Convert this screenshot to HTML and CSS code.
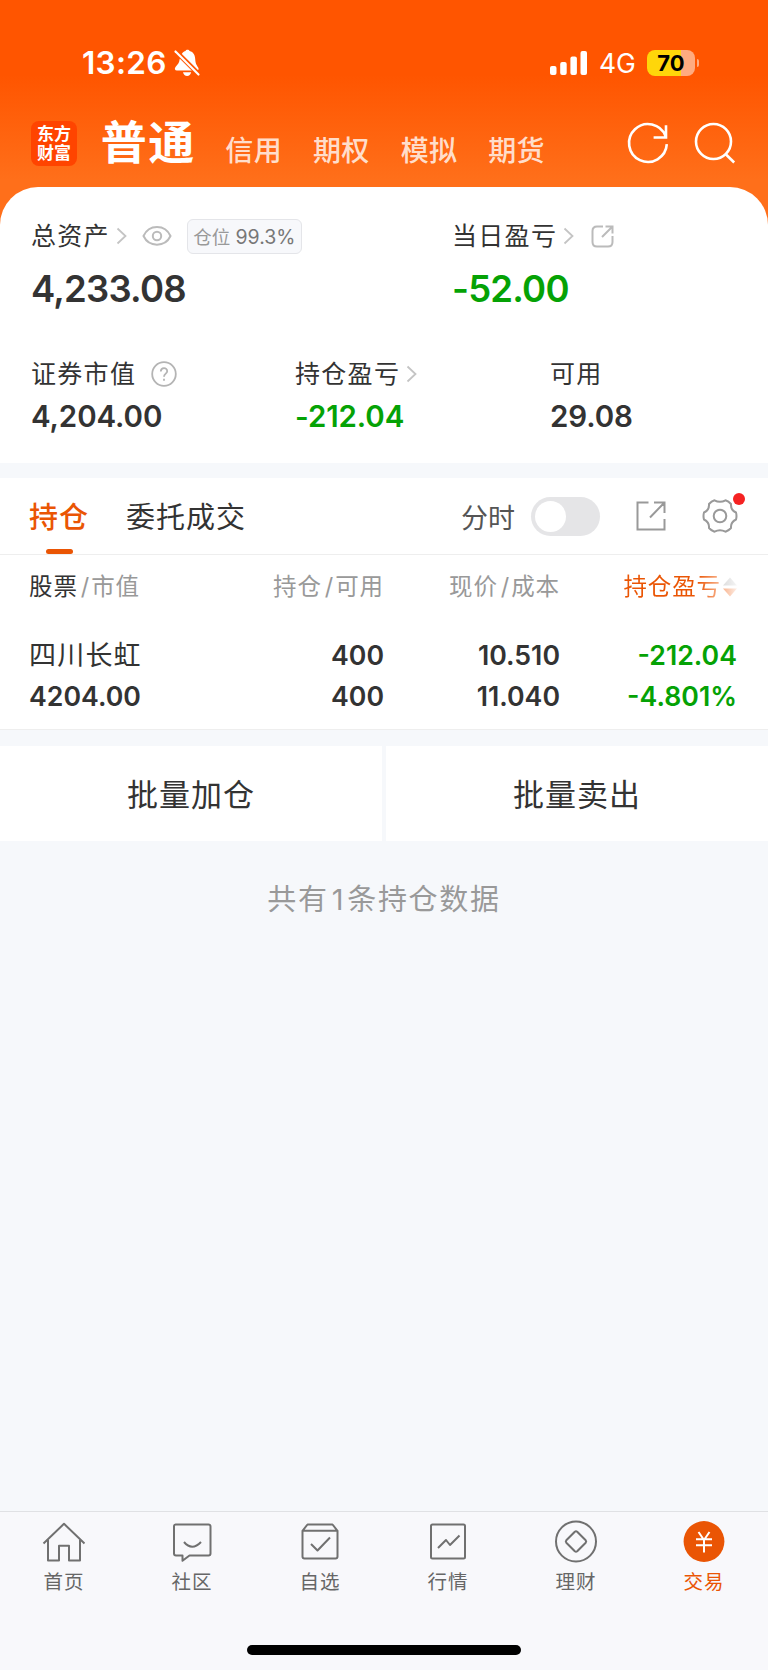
FILE: index.html
```html
<!DOCTYPE html>
<html lang="zh-CN">
<head>
<meta charset="utf-8">
<meta name="viewport" content="width=device-width, initial-scale=1">
<title>交易</title>
<link rel="stylesheet" href="styles.css">
</head>
<body>
<div class="page">

<div class="top">
  <div class="status">
    <span class="time">13:26</span>
    <svg class="bell" width="26" height="28" viewBox="0 0 26 28">
      <path fill="#fff" d="M6.800 7C8 4 9.500 2.500 11.500 2C12 .3 15 .3 15.600 2C19.500 3 21 6 21.200 10C21.400 14.500 22.500 16 24 18.200C25.200 20.200 24.500 21.500 22.500 21.500H3C.7 21.500.3 19.500 1.500 18C4 15 5.200 14 5.600 10.500Z"/>
      <path fill="#fff" d="M9 23.300h8.200c-.6 2.400-2 3.700-4.100 3.700s-3.600-1.300-4.100-3.700z"/>
      <path stroke="#ff5500" stroke-width="4.600" d="M2 2.500L25 25.500"/>
      <path stroke="#fff" stroke-width="2.200" stroke-linecap="round" d="M1.500 2.500L24.500 25.500"/>
    </svg>
    <svg class="signal" width="37" height="24" viewBox="0 0 37 24">
      <rect x="0" y="15" width="6.500" height="9" rx="2"/>
      <rect x="10.200" y="11" width="6.500" height="13" rx="2"/>
      <rect x="20.400" y="5.500" width="6.500" height="18.500" rx="2"/>
      <rect x="30.500" y="0" width="6.500" height="24" rx="2"/>
    </svg>
    <span class="net">4G</span>
    <span class="battery">70</span><i class="cap"></i>
  </div>
  <div class="nav">
    <div class="logo">东方<br>财富</div>
    <b class="now">普通</b>
    <span class="type">信用</span>
    <span class="type">期权</span>
    <span class="type">模拟</span>
    <span class="type">期货</span>
    <svg class="refresh" width="42" height="42" viewBox="0 0 42 42" stroke="#fff" stroke-width="2.600">
      <path d="M39.800 22.200A18.900 18.900 0 1 1 38.500 14M39 3.200v12.300H26.600"/>
    </svg>
    <svg class="search" width="42" height="42" viewBox="0 0 42 42" stroke="#fff" stroke-width="2.600">
      <circle cx="19.500" cy="19.500" r="17.500"/><path d="M31.500 32L40.200 40.500"/>
    </svg>
  </div>
</div>

<div class="card">
  <div class="row1">
    <div class="total">
      <div class="label">总资产
        <svg class="arrow" width="11" height="18" viewBox="0 0 11 18"><path d="M1.500 1.500L9.500 9L1.500 16.500"/></svg>
        <svg class="eye" width="30" height="22" viewBox="0 0 30 22"><path d="M1.500 11C7-1 23-1 28.500 11C23 22.500 7 22.500 1.500 11Z"/><circle cx="15" cy="11" r="4.200"/></svg>
        <span class="badge">仓位 <em>99.3%</em></span>
      </div>
      <div class="big">4,233.08</div>
    </div>
    <div class="today">
      <div class="label">当日盈亏
        <svg class="arrow" width="11" height="18" viewBox="0 0 11 18"><path d="M1.500 1.500L9.500 9L1.500 16.500"/></svg>
        <svg class="out" width="23" height="23" viewBox="0 0 23 23"><path d="M12 1.500H6Q1.500 1.500 1.500 6v11q0 4.500 4.500 4.500h11q4.500 0 4.500-4.500v-6M14.500 1.500h7v7M21.500 1.500L11 12"/></svg>
      </div>
      <div class="big green">-52.00</div>
    </div>
  </div>
  <div class="row2">
    <div>
      <div class="label">证券市值
        <svg class="help" width="26" height="26" viewBox="0 0 26 26"><circle cx="13" cy="13" r="11.800"/><path d="M9.800 10.500C9.800 6 16.200 6 16.200 10.200C16.200 12.800 13 12.600 13 15.800M13 17.800v2"/></svg>
      </div>
      <div class="mid">4,204.00</div>
    </div>
    <div>
      <div class="label">持仓盈亏
        <svg class="arrow" width="11" height="18" viewBox="0 0 11 18"><path d="M1.500 1.500L9.500 9L1.500 16.500"/></svg>
      </div>
      <div class="mid green">-212.04</div>
    </div>
    <div>
      <div class="label">可用</div>
      <div class="mid">29.08</div>
    </div>
  </div>
</div>

<div class="tabs">
  <span class="tab on">持仓</span>
  <span class="tab">委托成交</span>
  <span class="fs">分时</span>
  <span class="switch"></span>
  <svg class="share" width="30" height="30" viewBox="0 0 30 30"><path d="M12.500 1.500H1.500v27h27V18M18 1.500h10.500v10.500M28.500 1.500L14 16.500"/></svg>
  <div class="gear">
    <svg width="36" height="36" viewBox="0 0 36 36"><path d="M34 14.500Q35 18 34 21.500Q28.500 24 29 30Q26.500 32.800 23.500 33.700Q18 30.600 12.500 33.700Q9.500 32.800 7 30Q7.500 24 2 21.500Q1 18 2 14.500Q7.500 12 7 6Q9.500 3.200 12.500 2.300Q18 5.400 23.500 2.300Q26.500 3.200 29 6Q28.500 12 34 14.500Z"/><circle cx="18" cy="18" r="6.300"/></svg>
    <i></i>
  </div>
</div>

<div class="list">
  <div class="line head">
    <span><b>股票</b><s>/</s>市值</span>
    <span>持仓<s>/</s>可用</span>
    <span>现价<s>/</s>成本</span>
    <span class="sort"><em>持仓盈亏</em><svg width="14" height="20" viewBox="0 0 14 20"><defs><linearGradient id="up"><stop offset="0" stop-color="#ddd"/><stop offset="1" stop-color="#f5f5f5"/></linearGradient><linearGradient id="down"><stop offset="0" stop-color="#f9b590"/><stop offset="1" stop-color="#fdeee6"/></linearGradient></defs><path fill="url(#up)" d="M0 8.500L7 .5l7 8z"/><path fill="url(#down)" d="M0 11.500h14l-7 8z"/></svg></span>
  </div>
  <div class="line">
    <span class="name">四川长虹</span>
    <span>400</span>
    <span>10.510</span>
    <span class="green">-212.04</span>
  </div>
  <div class="line">
    <span>4204.00</span>
    <span>400</span>
    <span>11.040</span>
    <span class="green">-4.801%</span>
  </div>
</div>

<div class="btns">
  <div>批量加仓</div>
  <div>批量卖出</div>
</div>
<div class="count">共有<em>1</em>条持仓数据</div>

<div class="bottom">
  <div class="menu">
    <div class="item">
      <svg width="44" height="42" viewBox="0 0 44 42"><path d="M1.500 21.500L22 1.800L42.500 21.500M6 18v20.500h11V23.800h10v14.700h11V18"/></svg>
      首页
    </div>
    <div class="item">
      <svg width="44" height="42" viewBox="0 0 44 42"><path d="M5.500 2.500h33q2 0 2 2v27q0 2-2 2H19.500L12.500 38.800V33.500H6q-2 0-2-2v-27q0-2 1.500-2zM14 20q8 9.500 17 0"/></svg>
      社区
    </div>
    <div class="item">
      <svg width="44" height="42" viewBox="0 0 44 42"><path d="M4.500 8.800L9.500 2.500h25L39.500 8.800M4.500 8.800h35v25.700q0 2-2 2h-31q-2 0-2-2zM13 22l6.500 6.500L32 15.500"/></svg>
      自选
    </div>
    <div class="item">
      <svg width="44" height="42" viewBox="0 0 44 42"><rect x="5" y="2.500" width="34" height="34" rx="1.500"/><path d="M12 26l8-8l4 5l9.500-9.500"/></svg>
      行情
    </div>
    <div class="item">
      <svg width="44" height="42" viewBox="0 0 44 42"><circle cx="22" cy="19.500" r="20"/><path d="M20.800 9.800q1.200-1 2.400 0l8.500 8.500q1 1.200 0 2.400l-8.500 8.500q-1.200 1-2.400 0l-8.500-8.500q-1-1.200 0-2.400z"/></svg>
      理财
    </div>
    <div class="item cur">
      <svg width="44" height="42" viewBox="0 0 44 42"><circle cx="22" cy="19.500" r="20.400"/><path d="M16.500 10L22 18L27.500 10M22 18v12.500M14 17.300h16M14 23.300h16"/></svg>
      交易
    </div>
  </div>
  <div class="home"></div>
</div>

</div>
</body>
</html>
```

FILE: styles.css
```css
body, html {
	margin: 0;
	padding: 0;
	background: #f6f8fb;
	color: #333;
	font-family: Inter, "Noto Sans CJK SC", sans-serif;
	font-size: 25px;
}
* {
	box-sizing: border-box;
}
svg {
	display: block;
	flex: none;
	fill: none;
	overflow: visible;
}
em, i {
	font-style: normal;
}
.page {
	width: 768px;
	height: 1670px;
	display: flex;
	flex-direction: column;
	overflow: hidden;
}
.green {
	color: #05a205;
}

/* header */
.top {
	height: 227px;
	flex: none;
	background: linear-gradient(#ff5500 0, #ff5500 75px, #ff6f1a 180px);
	color: #fff;
}
.status {
	height: 76px;
	padding: 49px 0 0 82px;
	display: flex;
	align-items: center;
}
.time {
	width: 92px;
	font-size: 31.5px;
	font-weight: 600;
	letter-spacing: .3px;
	line-height: 27px;
}
.signal {
	margin-left: 350px;
	fill: #fff;
}
.net {
	width: 48px;
	margin-left: 12px;
	font-size: 26.5px;
	line-height: 27px;
	padding-top: 2px;
}
.battery {
	width: 48px;
	height: 26px;
	border-radius: 8px;
	background: linear-gradient(90deg, #ffd60a 34px, #ffab80 34px);
	color: #000;
	font-size: 22px;
	font-weight: 700;
	line-height: 26px;
	text-align: center;
}
.cap {
	width: 2px;
	height: 8px;
	margin-left: 2px;
	border-radius: 0 3px 3px 0;
	background: #ffab80;
}
.nav {
	height: 111px;
	padding: 0 32px 0 31px;
	display: flex;
}
.logo {
	width: 46px;
	height: 45px;
	margin-top: 45px;
	padding-top: 4px;
	border-radius: 8px;
	background: #ff4400;
	font-size: 17px;
	font-weight: 700;
	line-height: 19px;
	text-align: center;
}
.now {
	width: 125px;
	margin: 32px 0 0 24px;
	font-size: 46px;
	letter-spacing: 1.5px;
	line-height: 69px;
}
.type {
	width: 88px;
	margin-top: 55px;
	font-size: 28px;
	font-weight: 500;
	letter-spacing: .3px;
	line-height: 40px;
	color: rgba(255,255,255,.8);
}
.refresh {
	margin: 46px 0 0 51px;
}
.search {
	margin: 46px 0 0 25px;
}

/* assets */
.card {
	height: 276px;
	margin-top: -40px;
	flex: none;
	padding: 29px 0 0 31px;
	border-radius: 38px 38px 0 0;
	background: #fff;
}
.row1 {
	display: grid;
	grid-template-columns: 421px 1fr;
	height: 138px;
}
.row2 {
	display: grid;
	grid-template-columns: 264px 255px 1fr;
}
.label {
	height: 40px;
	display: flex;
	align-items: center;
	letter-spacing: 1.3px;
	line-height: 40px;
}
.arrow {
	margin-left: 6px;
	stroke: #c4c4c4;
	stroke-width: 1.8;
}
.eye {
	margin-left: 15px;
	stroke: #bbb;
	stroke-width: 2;
}
.badge {
	width: 115px;
	height: 35px;
	margin-left: 15px;
	border: 1px solid #e4e5e9;
	border-radius: 6px;
	background: #f7f8fb;
	color: #999;
	font-size: 18.5px;
	letter-spacing: 0;
	line-height: 34px;
	text-align: center;
	white-space: nowrap;
}
.badge em {
	color: #777;
	font-size: 19.5px;
}
.out {
	margin-left: 17px;
	stroke: #bbb;
	stroke-width: 2;
}
.help {
	margin-left: 15px;
	stroke: #b4b4b4;
	stroke-width: 1.8;
}
.big {
	font-size: 36.5px;
	font-weight: 600;
	letter-spacing: -.8px;
	line-height: 66px;
}
.mid {
	font-size: 29.5px;
	font-weight: 600;
	letter-spacing: -.1px;
	line-height: 44px;
}

/* tabs */
.tabs {
	height: 77px;
	margin-top: 15px;
	flex: none;
	padding-left: 29px;
	display: flex;
	align-items: center;
	border-bottom: 1px solid #eee;
	background: #fff;
}
.tab {
	height: 76px;
	flex: none;
	margin-right: 37px;
	font-size: 29px;
	letter-spacing: 1px;
	line-height: 79px;
	white-space: nowrap;
}
.on {
	width: 60px;
	color: #ea5504;
	font-weight: 500;
	display: flex;
	flex-direction: column;
	align-items: center;
}
.on::after {
	content: "";
	width: 27px;
	height: 5px;
	margin-top: -8px;
	border-radius: 3px;
	background: #ea5504;
}
.fs {
	width: 70px;
	margin-left: auto;
	color: #555;
	font-size: 27px;
}
.switch {
	width: 69px;
	height: 39px;
	padding: 4px;
	border-radius: 20px;
	background: #e5e5e7;
}
.switch::before {
	content: "";
	display: block;
	width: 31px;
	height: 31px;
	border-radius: 50%;
	background: #fff;
}
.share {
	margin-left: 36px;
	stroke: #999;
	stroke-width: 2;
}
.gear {
	position: relative;
	margin: 0 30px 0 36px;
	stroke: #999;
	stroke-width: 2;
	stroke-linejoin: round;
}
.gear i {
	position: absolute;
	top: -5px;
	right: -7px;
	width: 12px;
	height: 12px;
	border-radius: 50%;
	background: #f52222;
}

/* holdings */
.list {
	height: 175px;
	flex: none;
	padding: 11px 31px 0 29px;
	background: #fff;
	border-bottom: 1px solid #eee;
}
.line {
	height: 41px;
	display: grid;
	grid-template-columns: 180px 175px 176px 177px;
	font-size: 26.7px;
	font-weight: 600;
	line-height: 40px;
	text-align: right;
}
.line span:first-child {
	text-align: left;
}
.line .name {
	font-size: 27px;
	font-weight: 400;
	letter-spacing: 1.2px;
	line-height: 41px;
}
.head {
	height: 69px;
	color: #999;
	font-size: 23.5px;
	font-weight: 400;
	letter-spacing: .9px;
	line-height: 41px;
}
.head b {
	color: #333;
	font-weight: 400;
}
.head s {
	text-decoration: none;
	padding: 0 1px 0 3px;
}
.sort {
	display: flex;
	justify-content: flex-end;
	gap: 2px;
}
.sort em {
	background: linear-gradient(90deg, #ea5504 75px, #f9b590 97px);
	background-clip: text;
	-webkit-background-clip: text;
	color: transparent;
}
.sort svg {
	margin-top: 11px;
}

.btns {
	height: 95px;
	margin-top: 16px;
	flex: none;
	display: grid;
	grid-template-columns: 1fr 1fr;
	grid-template-rows: 95px;
	gap: 4px;
}
.btns div {
	background: #fff;
	font-size: 31px;
	letter-spacing: 1px;
	line-height: 97px;
	text-align: center;
}
.count {
	margin-top: 34px;
	color: #999;
	font-size: 29px;
	letter-spacing: 1.7px;
	line-height: 50px;
	text-align: center;
}
.count em {
	padding: 0 2px 0 3px;
}

/* bottom menu */
.bottom {
	height: 159px;
	margin-top: auto;
	flex: none;
	border-top: 1px solid #e0e1e4;
	background: #f8f8fb;
}
.menu {
	display: grid;
	grid-template-columns: repeat(6, 1fr);
	height: 133px;
	padding-top: 10px;
}
.item {
	display: flex;
	flex-direction: column;
	align-items: center;
	color: #666;
	font-size: 19.5px;
	letter-spacing: 1px;
	line-height: 37px;
}
.item svg {
	stroke: #707070;
	stroke-width: 2;
	stroke-linejoin: round;
}
.cur {
	color: #ea5504;
}
.cur svg {
	stroke: #fff;
}
.cur circle {
	fill: #ea5504;
	stroke: none;
}
.home {
	width: 274px;
	height: 10px;
	margin: 0 auto;
	border-radius: 5px;
	background: #000;
}
```
